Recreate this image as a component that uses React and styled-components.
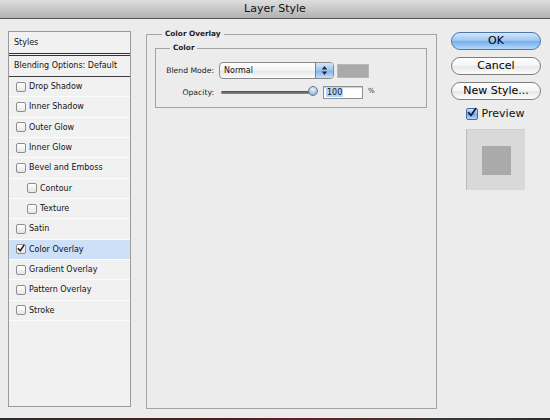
import React from "react";
import styled, { createGlobalStyle } from "styled-components";

const GlobalStyle = createGlobalStyle`
  html, body {
    margin: 0;
    padding: 0;
    background: #ececec;
  }
  body {
    font-family: "DejaVu Sans", "Liberation Sans", sans-serif;
    color: #111;
  }
`;

const styleItems = [
  { name: "Drop Shadow" },
  { name: "Inner Shadow" },
  { name: "Outer Glow" },
  { name: "Inner Glow" },
  { name: "Bevel and Emboss" },
  { name: "Contour", indent: true },
  { name: "Texture", indent: true },
  { name: "Satin" },
  { name: "Color Overlay", checked: true, active: true },
  { name: "Gradient Overlay" },
  { name: "Pattern Overlay" },
  { name: "Stroke" },
];

function CheckMark({ color }) {
  return (
    <svg width="10" height="10" viewBox="0 0 10 10">
      <path
        d="M1.6 5.2 L4 8 L8.6 1.2"
        fill="none"
        stroke={color}
        strokeWidth="1.8"
        strokeLinecap="round"
        strokeLinejoin="round"
      />
    </svg>
  );
}

function App() {
  return (
    <Window>
      <GlobalStyle />
      <TitleBar>Layer Style</TitleBar>
      <Body>
        <StylesPanel>
          <HeaderRow>Styles</HeaderRow>
          <BlendRow>Blending Options: Default</BlendRow>
          {styleItems.map((item) => (
            <ItemRow key={item.name} $indent={item.indent} $active={item.active}>
              <SmallBox>{item.checked && <CheckMark color="#111" />}</SmallBox>
              {item.name}
            </ItemRow>
          ))}
        </StylesPanel>

        <Group>
          <Legend $ml={7}>Color Overlay</Legend>
          <InnerGroup>
            <Legend $ml={10}>Color</Legend>
            <FieldGrid>
              <FieldLabel>Blend Mode:</FieldLabel>
              <Controls>
                <Select>
                  <SelectText>Normal</SelectText>
                  <Stepper>
                    <svg width="7" height="11" viewBox="0 0 7 11">
                      <path d="M3.5 1 L6.2 4.4 L0.8 4.4 Z" fill="#1c2a44" />
                      <path d="M3.5 10 L6.2 6.6 L0.8 6.6 Z" fill="#1c2a44" />
                    </svg>
                  </Stepper>
                </Select>
                <Swatch />
              </Controls>
              <FieldLabel>Opacity:</FieldLabel>
              <Controls $gap={5}>
                <Slider>
                  <Track />
                  <Thumb style={{ left: "calc(100% - 10px)" }} />
                </Slider>
                <NumberInput>
                  <Selected>100</Selected>
                </NumberInput>
                <Unit>%</Unit>
              </Controls>
            </FieldGrid>
          </InnerGroup>
        </Group>

        <Side>
          <Button $primary>OK</Button>
          <Button>Cancel</Button>
          <Button>New Style...</Button>
          <PreviewToggle>
            <AquaCheck>
              <CheckMark color="#0d1f3f" />
            </AquaCheck>
            Preview
          </PreviewToggle>
          <PreviewBox>
            <PreviewSquare />
          </PreviewBox>
        </Side>
      </Body>
      <BottomEdge />
    </Window>
  );
}

export default App;

const Window = styled.div`
  width: 550px;
  height: 420px;
  display: flex;
  flex-direction: column;
  overflow: hidden;
  background: #ececec;
`;

const TitleBar = styled.div`
  height: 18px;
  line-height: 18px;
  border-bottom: 1px solid #555;
  background: linear-gradient(#dedede, #c4c4c4 60%, #b0b0b0);
  text-align: center;
  font-size: 11px;
  color: #111;
`;

const Body = styled.div`
  flex: 1;
  display: flex;
  align-items: flex-start;
  padding: 10px 0 0 8px;
`;

const BottomEdge = styled.div`
  height: 2px;
  background: linear-gradient(90deg, #2c2c2c, #4a1e22 40%, #6a1c26 55%, #3a3a3a 80%, #2c2c2c);
`;

const StylesPanel = styled.div`
  box-sizing: border-box;
  width: 123px;
  height: 376px;
  margin-top: 2px;
  border: 1px solid #9a9a9a;
  background: #f1f1f1;
  font-size: 8px;
`;

const HeaderRow = styled.div`
  height: 21px;
  line-height: 21px;
  padding-left: 5px;
  border-bottom: 3px double #333;
`;

const BlendRow = styled.div`
  box-sizing: border-box;
  height: 21px;
  line-height: 20px;
  padding-left: 5px;
  border-bottom: 1px solid #3c3c3c;
`;

const ItemRow = styled.div`
  box-sizing: border-box;
  height: 20.33px;
  display: flex;
  align-items: center;
  padding-left: ${(p) => (p.$indent ? 18 : 7)}px;
  border-bottom: 1px solid #fdfdfd;
  background: ${(p) => (p.$active ? "#cde0f8" : "transparent")};
`;

const SmallBox = styled.span`
  box-sizing: border-box;
  width: 10px;
  height: 10px;
  margin-right: 3px;
  border: 1px solid #8e8e8e;
  border-radius: 2px;
  background: linear-gradient(#ffffff, #e6e6e6);
  display: flex;
  align-items: center;
  justify-content: center;
  svg {
    width: 9px;
    height: 9px;
    margin-top: -1px;
  }
`;

const Group = styled.fieldset`
  box-sizing: border-box;
  width: 291px;
  height: 380px;
  margin: 0 0 0 15px;
  padding: 4px 9px 0 8px;
  min-width: 0;
  border: 1px solid #a4a4a4;
`;

const InnerGroup = styled.fieldset`
  margin: 0;
  padding: 9px 8px 8px 4px;
  min-width: 0;
  border: 1px solid #a4a4a4;
`;

const Legend = styled.legend`
  margin-left: ${(p) => p.$ml}px;
  padding: 0 3px;
  font-size: 7.3px;
  line-height: 10px;
  font-weight: bold;
  color: #1d1d1d;
`;

const FieldGrid = styled.div`
  display: grid;
  grid-template-columns: 54px auto;
  grid-template-rows: 17px 14px;
  column-gap: 5px;
  row-gap: 6px;
  align-items: center;
`;

const FieldLabel = styled.div`
  text-align: right;
  font-size: 7.7px;
  color: #222;
`;

const Controls = styled.div`
  display: flex;
  align-items: center;
  gap: ${(p) => p.$gap || 3}px;
`;

const Select = styled.div`
  box-sizing: border-box;
  width: 115px;
  height: 17px;
  display: flex;
  border: 1px solid #8a8a8a;
  border-radius: 4px;
  background: linear-gradient(#ffffff, #f3f3f3 50%, #e4e4e4 51%, #fbfbfb);
  overflow: hidden;
`;

const SelectText = styled.span`
  flex: 1;
  padding-left: 4px;
  font-size: 8px;
  line-height: 15px;
`;

const Stepper = styled.span`
  width: 17px;
  display: flex;
  align-items: center;
  justify-content: center;
  border-left: 1px solid #6b86aa;
  background: linear-gradient(#d6e7fa, #9cc2ec 50%, #80b0e6 51%, #c4e0fb);
`;

const Swatch = styled.div`
  box-sizing: border-box;
  width: 32px;
  height: 14px;
  background: #a9a9a9;
  border: 1px solid #b8b8b8;
`;

const Slider = styled.div`
  position: relative;
  width: 97px;
  height: 12px;
  margin-left: 2px;
`;

const Track = styled.div`
  position: absolute;
  left: 0;
  right: 5px;
  top: 5px;
  height: 3px;
  border-radius: 2px;
  background: linear-gradient(#4f4f4f, #8c8c8c);
`;

const Thumb = styled.div`
  position: absolute;
  top: 0;
  box-sizing: border-box;
  width: 10px;
  height: 10px;
  border-radius: 50%;
  border: 1px solid #5d7a9e;
  background: radial-gradient(circle at 50% 30%, #eef4fb, #a9c3e2 60%, #7f9fc6);
`;

const NumberInput = styled.div`
  box-sizing: border-box;
  width: 40px;
  height: 13px;
  padding: 1px 2px;
  border: 1px solid #8f8f8f;
  box-shadow: inset 0 1px 1px rgba(0, 0, 0, 0.2);
  background: #fff;
  font-size: 8px;
  line-height: 9px;
`;

const Selected = styled.span`
  background: #b5d4fb;
  padding: 0 1px;
`;

const Unit = styled.span`
  font-size: 7px;
  color: #333;
  margin-top: -3px;
`;

const Side = styled.div`
  width: 90px;
  margin: 3px 0 0 14px;
  display: flex;
  flex-direction: column;
  align-items: center;
  gap: 7px;
`;

const Button = styled.div`
  box-sizing: border-box;
  width: 90px;
  height: 18px;
  border-radius: 9px;
  border: 1px solid ${(p) => (p.$primary ? "#4d75a8" : "#7f7f7f")};
  background: ${(p) =>
    p.$primary
      ? "linear-gradient(#d3e7fc, #9cc7f1 48%, #74aeeb 52%, #b7dafc)"
      : "linear-gradient(#ffffff, #f5f5f5 48%, #e6e6e6 52%, #fdfdfd)"};
  text-align: center;
  font-size: 11px;
  line-height: 16px;
  color: #000;
`;

const PreviewToggle = styled.div`
  display: flex;
  align-items: center;
  gap: 4px;
  font-size: 11px;
  line-height: 13px;
  margin-right: 2px;
`;

const AquaCheck = styled.span`
  box-sizing: border-box;
  width: 12px;
  height: 12px;
  border: 1px solid #4a6d9e;
  border-radius: 2px;
  background: linear-gradient(#cfe4fb, #86b7ec 50%, #6fa8e8 51%, #b5d8fb);
  display: flex;
  align-items: center;
  justify-content: center;
  svg {
    width: 11px;
    height: 11px;
    margin-top: -2px;
  }
`;

const PreviewBox = styled.div`
  box-sizing: border-box;
  width: 59px;
  height: 61px;
  margin-top: 2px;
  margin-right: 1px;
  display: flex;
  align-items: center;
  justify-content: center;
  background: #d9d9d9;
  border-left: 1px solid #b9b9b9;
  border-top: 1px solid #cfcfcf;
`;

const PreviewSquare = styled.div`
  width: 29px;
  height: 29px;
  background: #aaaaaa;
`;
